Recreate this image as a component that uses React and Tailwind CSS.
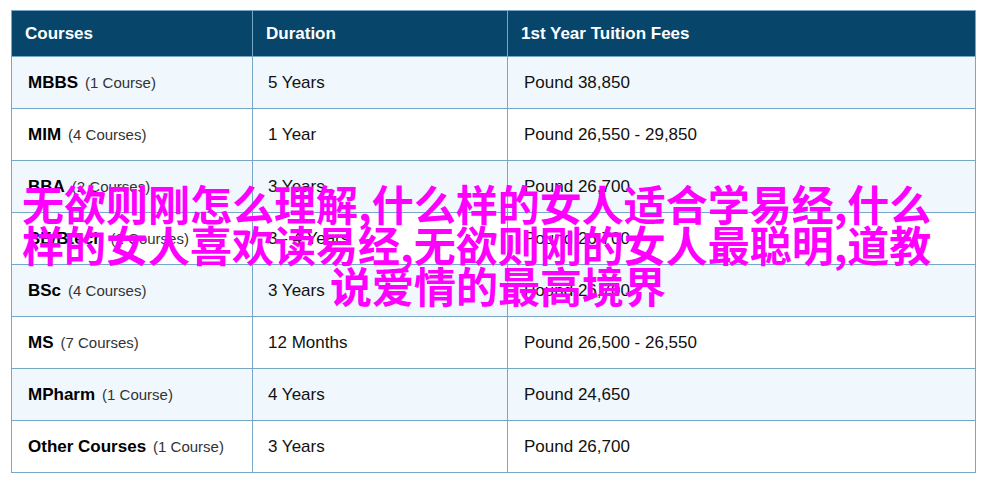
import React from 'react'

const rows = [
  { name: 'MBBS', count: '(1 Course)', duration: '5 Years', fee: 'Pound 38,850' },
  { name: 'MIM', count: '(4 Courses)', duration: '1 Year', fee: 'Pound 26,550 - 29,850' },
  { name: 'BBA', count: '(2 Courses)', duration: '3 Years', fee: 'Pound 26,700' },
  { name: 'BE/Btech', count: '(2 Courses)', duration: '3 - 4 Years', fee: 'Pound 26,700' },
  { name: 'BSc', count: '(4 Courses)', duration: '3 Years', fee: 'Pound 26,700' },
  { name: 'MS', count: '(7 Courses)', duration: '12 Months', fee: 'Pound 26,500 - 26,550' },
  { name: 'MPharm', count: '(1 Course)', duration: '4 Years', fee: 'Pound 24,650' },
  { name: 'Other Courses', count: '(1 Course)', duration: '3 Years', fee: 'Pound 26,700' },
]

const App = () => {
  return (
    <div className="relative w-[984px] h-[483px] bg-white font-['Liberation_Sans',Arial,sans-serif] overflow-hidden">
      <div className="pt-[10px] pl-[11px]">
        <table className="border-collapse w-[964px] table-fixed">
          <colgroup>
            <col className="w-[241px]" />
            <col className="w-[255px]" />
            <col className="w-[468px]" />
          </colgroup>
          <thead>
            <tr className="bg-[#07466a] text-white text-left h-[46px]">
              <th className="border border-[#78a6c6] pl-[13px] text-[17px] font-bold">Courses</th>
              <th className="border border-[#78a6c6] pl-[13px] text-[17px] font-bold">Duration</th>
              <th className="border border-[#78a6c6] pl-[13px] text-[17px] font-bold">1st Year Tuition Fees</th>
            </tr>
          </thead>
          <tbody>
            {rows.map((r, i) => (
              <tr key={r.name} className={`h-[52px] text-[#111] ${i % 2 === 0 ? 'bg-[#f0f8fe]' : 'bg-white'}`}>
                <td className="border border-[#78a6c6] pl-[16px] text-[17px]">
                  <span className="font-bold text-black">{r.name}</span>
                  <span className="ml-[7px] text-[15px] text-[#333]">{r.count}</span>
                </td>
                <td className="border border-[#78a6c6] pl-[15px] text-[17px]">{r.duration}</td>
                <td className="border border-[#78a6c6] pl-[16px] text-[17px]">{r.fee}</td>
              </tr>
            ))}
          </tbody>
        </table>
      </div>

      <div className="absolute left-[22px] top-[182px] text-[42px] leading-[41px] font-bold text-[#ff00ff] whitespace-nowrap font-['Noto_Sans_CJK_SC','Noto_Sans',sans-serif]">
        <div>无欲则刚怎么理解,什么样的女人适合学易经,什么</div>
        <div>样的女人喜欢读易经,无欲则刚的女人最聪明,道教</div>
        <div className="ml-[308px]">说爱情的最高境界</div>
      </div>
    </div>
  )
}

export default App
